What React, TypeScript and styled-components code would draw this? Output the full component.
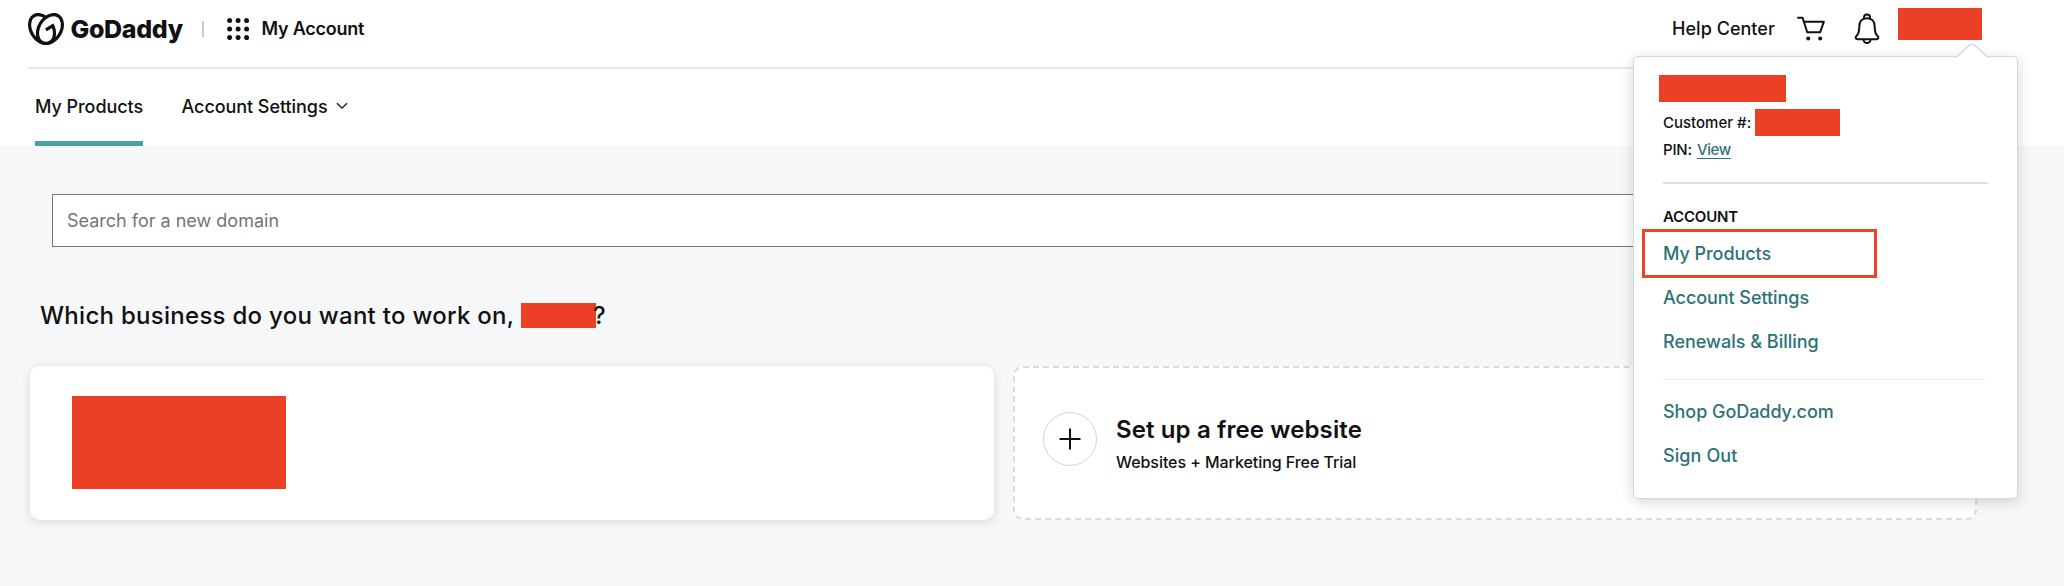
import React from "react";
import styled, { createGlobalStyle } from "styled-components";
import { SiGodaddy } from "react-icons/si";

const GlobalStyle = createGlobalStyle`
  * { box-sizing: border-box; }
  body {
    margin: 0;
    background: #f5f7f8;
    color: #111;
    font-family: Inter, "Liberation Sans", sans-serif;
  }
`;

const Page = styled.div`
  position: relative;
  width: 2064px;
  height: 586px;
  overflow: hidden;
`;

const Header = styled.header`
  height: 145.5px;
  background: #fff;
  padding-left: 28px;
`;

const TopBar = styled.div`
  display: flex;
  align-items: center;
  width: 1962px;
  height: 69px;
  padding-bottom: 10px;
  border-bottom: 2px solid #e2e8ed;
`;

const Label = styled.span<{ $w?: number; $size?: number; $weight?: number; $spacing?: number }>`
  flex: none;
  width: ${(p) => (p.$w ? `${p.$w}px` : "auto")};
  font-size: ${(p) => p.$size ?? 18}px;
  font-weight: ${(p) => p.$weight ?? 450};
  letter-spacing: ${(p) => p.$spacing ?? 0}px;
  white-space: nowrap;
`;

const LogoMark = styled(SiGodaddy)`
  flex: none;
  width: 36px;
  height: 36px;
  margin-right: 6.5px;
`;

const Separator = styled.span`
  width: 2px;
  height: 16px;
  margin: 1px 23px 0 18px;
  background: #ccc;
`;

const AppsIcon = styled.svg`
  flex: none;
  width: 22px;
  height: 22px;
  margin-right: 13px;
`;

const TopActions = styled.div`
  display: flex;
  align-items: center;
  margin-left: auto;
  padding-right: 8px;
`;

const CartIcon = styled.svg`
  width: 30px;
  height: 30px;
  margin-left: 20px;
`;

const BellIcon = styled.svg`
  width: 26px;
  height: 32px;
  margin: 0 18px 0 28px;
`;

const Redaction = styled.span<{ $w: number; $h: number }>`
  flex: none;
  display: block;
  width: ${(p) => p.$w}px;
  height: ${(p) => p.$h}px;
  background: #eb4026;
`;

const UserName = styled(Redaction)`
  margin-top: -9px;
`;

const Tabs = styled.nav`
  display: flex;
  height: 76.5px;
  padding-left: 7px;
  gap: 38.5px;
`;

const Tab = styled.div<{ $active?: boolean }>`
  display: flex;
  align-items: center;
  padding-top: 3px;
  border-bottom: 5px solid ${(p) => (p.$active ? "#48a2a4" : "transparent")};
`;

const Chevron = styled.svg`
  width: 12px;
  height: 8px;
  margin-left: 8px;
`;

const Search = styled.div`
  display: flex;
  align-items: center;
  width: 1900px;
  height: 53px;
  margin: 48px 0 0 52px;
  padding-left: 14px;
  border: 1.5px solid #767676;
  background: #fff;
  color: #757575;
`;

const Question = styled.h1`
  display: flex;
  align-items: center;
  height: 40px;
  margin: 49px 0 0 40px;
  font: inherit;
`;

const QuestionMark = styled(Label)`
  margin-left: -3px;
`;

const Cards = styled.div`
  display: grid;
  grid-template-columns: 964px 964px;
  gap: 19px;
  margin: 30px 0 0 30px;
`;

const BusinessCard = styled.section`
  height: 154px;
  padding: 30.5px 41.5px;
  border-radius: 10px;
  background: #fff;
  box-shadow: 0 2px 10px rgba(0, 0, 0, 0.13);
`;

const SetupCard = styled.section`
  display: flex;
  align-items: center;
  height: 154px;
  padding: 0 0 8px 28px;
  border: 2px dashed #d9dbdc;
  border-radius: 10px;
  background: #fff;
`;

const AddCircle = styled.span`
  display: flex;
  align-items: center;
  justify-content: center;
  width: 54px;
  height: 54px;
  margin-right: 19px;
  border: 1px solid #d4d4d4;
  border-radius: 50%;
`;

const SetupText = styled.div`
  display: flex;
  flex-direction: column;
  gap: 2px;
  padding-top: 15px;
  line-height: 30px;
`;

const Popover = styled.aside`
  position: absolute;
  left: 1633px;
  top: 56px;
  width: 385px;
  height: 442.5px;
  padding: 18px 29px 0;
  border: 1.5px solid #d5dadf;
  border-radius: 5px;
  background: #fff;
  box-shadow: 0 3px 14px rgba(0, 0, 0, 0.16);
`;

const PopoverTip = styled.svg`
  position: absolute;
  left: 321px;
  top: -14px;
  width: 34px;
  height: 16px;
`;

const CustomerName = styled(Redaction)`
  margin-left: -4.5px;
`;

const InfoRow = styled.div<{ $h: number }>`
  display: flex;
  align-items: center;
  height: ${(p) => p.$h}px;
`;

const ViewLink = styled(Label)`
  color: #2b7377;
  text-decoration: underline;
  text-underline-offset: 2.5px;
`;

const Rule = styled.div<{ $color: string; $h: number }>`
  height: ${(p) => p.$h}px;
  width: 325px;
  background: ${(p) => p.$color};
`;

const GroupTitle = styled.div`
  margin-top: 20px;
  line-height: 24px;
  height: 24px;
`;

const Menu = styled.ul<{ $top: number }>`
  margin: ${(p) => p.$top}px 0 0;
  padding: 0;
  list-style: none;
  color: #2b7377;
`;

const MenuItem = styled.li`
  position: relative;
  display: flex;
  align-items: center;
  height: 44.4px;
`;

const Highlight = styled.span`
  position: absolute;
  left: -21px;
  top: -2.5px;
  width: 235px;
  height: 49px;
  border: 3px solid #ee4426;
`;

const dots = [2.6, 11.1, 19.6];

export default function App() {
  return (
    <Page>
      <GlobalStyle />
      <Header>
        <TopBar>
          <LogoMark />
          <Label $w={113} $size={25} $weight={800} $spacing={-0.35}>GoDaddy</Label>
          <Separator />
          <AppsIcon viewBox="0 0 22 22">
            {dots.map((y) => dots.map((x) => <circle key={`${x}-${y}`} cx={x} cy={y} r="2.5" fill="#111" />))}
          </AppsIcon>
          <Label $weight={600} $spacing={-0.25}>My Account</Label>
          <TopActions>
            <Label $w={104} $spacing={0.04}>Help Center</Label>
            <CartIcon viewBox="0 0 30 30" fill="none" stroke="#111" strokeWidth="2" strokeLinecap="round" strokeLinejoin="round">
              <path d="M2 3.8h4.600l4.600 14.400h13l3.600-10.400H8" />
              <circle cx="12.2" cy="24.6" r="2" fill="#111" stroke="none" />
              <circle cx="24.2" cy="24.6" r="2" fill="#111" stroke="none" />
            </CartIcon>
            <BellIcon viewBox="0 0 26 32" fill="none" stroke="#111" strokeWidth="2" strokeLinejoin="round">
              <path d="M13 5.2c-5 0-7.7 3.5-7.7 8.2 0 5.8-.8 7.6-2.7 9.4-1.7 1.7-1 3.4 1 3.4h18.8c2 0 2.7-1.7 1-3.4-1.9-1.8-2.7-3.6-2.7-9.4 0-4.7-2.7-8.2-7.7-8.2z" />
              <path d="M10 5.8V4.500a3 3 0 0 1 6 0v1.300M9.500 26.500a3.500 3.500 0 0 0 7 0" />
            </BellIcon>
            <UserName $w={84} $h={32} />
          </TopActions>
        </TopBar>
        <Tabs>
          <Tab $active><Label $w={108} $spacing={-0.06}>My Products</Label></Tab>
          <Tab>
            <Label $w={146} $spacing={-0.06}>Account Settings</Label>
            <Chevron viewBox="0 0 12 8" fill="none" stroke="#111" strokeWidth="1.3">
              <path d="M1 1.2l5 5 5-5" />
            </Chevron>
          </Tab>
        </Tabs>
      </Header>

      <Search><Label $weight={400}>Search for a new domain</Label></Search>
      <Question>
        <Label $w={481} $size={24} $spacing={0.28}>Which business do you want to work on,</Label>
        <Redaction $w={75} $h={25} />
        <QuestionMark $size={24}>?</QuestionMark>
      </Question>
      <Cards>
        <BusinessCard><Redaction $w={214} $h={92.5} /></BusinessCard>
        <SetupCard>
          <AddCircle>
            <svg width="22" height="22" viewBox="0 0 22 22" stroke="#111" strokeWidth="2">
              <path d="M11 .5v21M.5 11h21" />
            </svg>
          </AddCircle>
          <SetupText>
            <Label $size={24} $weight={600} $spacing={0.12}>Set up a free website</Label>
            <Label $size={16} $spacing={-0.06}>Websites + Marketing Free Trial</Label>
          </SetupText>
        </SetupCard>
      </Cards>

      <Popover>
        <PopoverTip viewBox="0 0 34 16" fill="#fff" stroke="#d5dadf" strokeWidth="1.5">
          <path d="M1 14.500L14 2.500q3-2.500 6 0L33 14.500" />
        </PopoverTip>
        <CustomerName $w={127} $h={27} />
        <InfoRow $h={41}>
          <Label $w={92} $size={15}>Customer #:</Label>
          <Redaction $w={85} $h={27.5} />
        </InfoRow>
        <InfoRow $h={13}>
          <Label $w={34} $size={15} $spacing={-0.2}>PIN:</Label>
          <ViewLink $size={15} $spacing={-0.4}>View</ViewLink>
        </InfoRow>
        <Rule $color="transparent" $h={25.5} />
        <Rule $color="#dce1e4" $h={2} />
        <GroupTitle><Label $size={15} $weight={600} $spacing={-0.2}>ACCOUNT</Label></GroupTitle>
        <Menu $top={3.5}>
          <MenuItem><Highlight /><Label $spacing={-0.06}>My Products</Label></MenuItem>
          <MenuItem><Label $spacing={-0.06}>Account Settings</Label></MenuItem>
          <MenuItem><Label>Renewals &amp; Billing</Label></MenuItem>
        </Menu>
        <Rule $color="transparent" $h={15} />
        <Rule $color="#f1f2f3" $h={1} />
        <Menu $top={9}>
          <MenuItem><Label $spacing={-0.05}>Shop GoDaddy.com</Label></MenuItem>
          <MenuItem><Label $spacing={0.1}>Sign Out</Label></MenuItem>
        </Menu>
      </Popover>
    </Page>
  );
}
